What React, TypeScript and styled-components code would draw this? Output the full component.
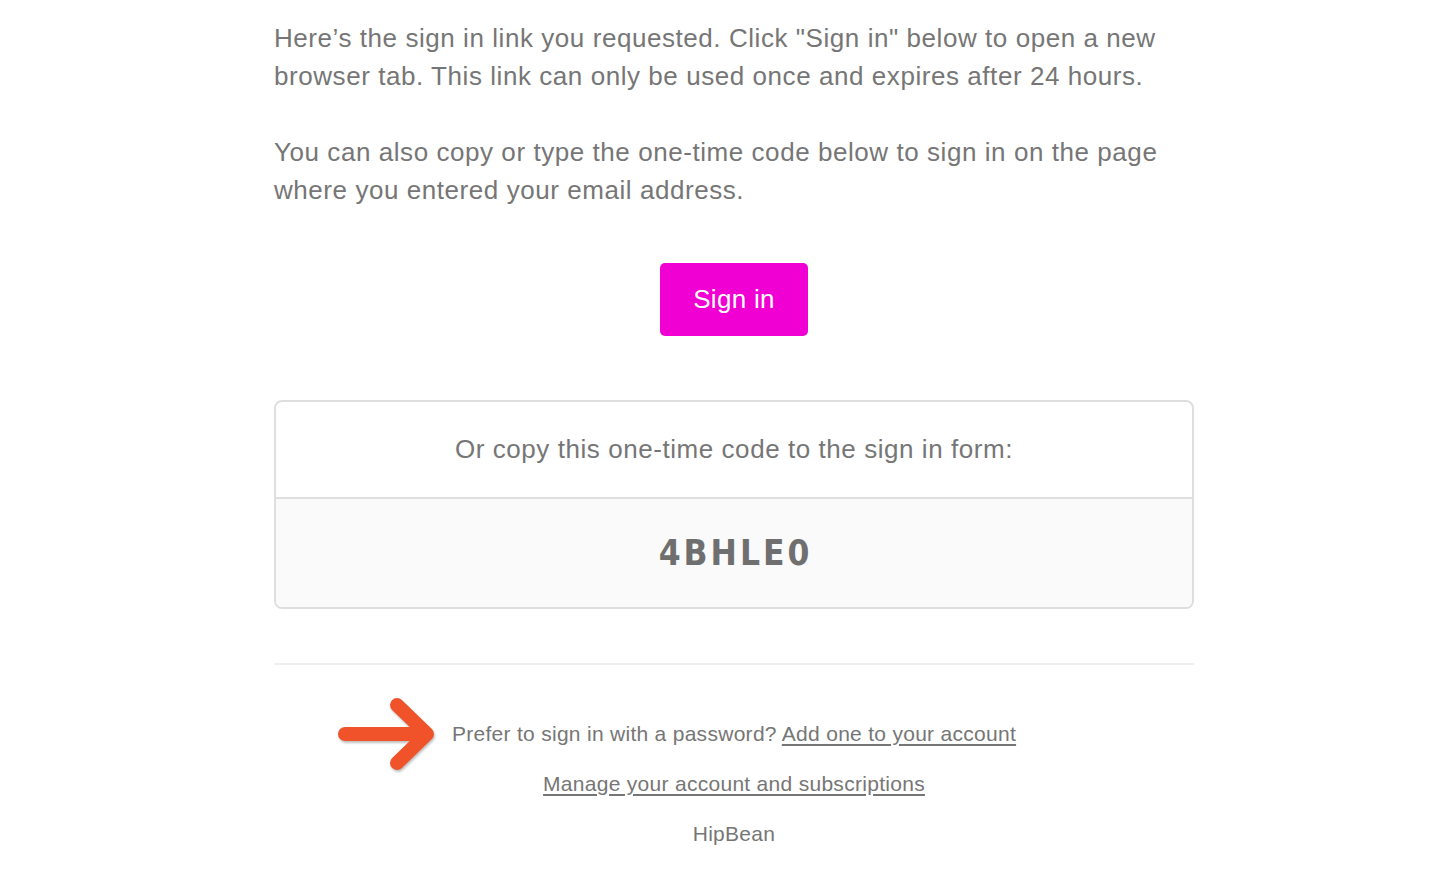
import React from 'react';
import styled, { createGlobalStyle } from 'styled-components';

const GlobalStyle = createGlobalStyle`
  body {
    margin: 0;
    background: #ffffff;
    font-family: "Liberation Sans", Arial, Helvetica, sans-serif;
    letter-spacing: 0.018em;
    color: #767676;
  }
`;

const Page = styled.div`
  width: 920px;
  margin-left: 274px;
  padding-top: 19px;
  padding-bottom: 40px;
  position: relative;
`;

const Paragraph = styled.p`
  margin: 0 0 38px;
  font-size: 26px;
  line-height: 38px;
  letter-spacing: 0.0215em;
  color: #767676;
`;

const ButtonRow = styled.div`
  display: flex;
  justify-content: center;
  margin-top: 54px;
`;

const SignInButton = styled.a`
  display: flex;
  align-items: center;
  justify-content: center;
  width: 148px;
  height: 73px;
  border-radius: 5px;
  background: #f100d3;
  color: #ffffff;
  font-size: 26px;
  text-decoration: none;
`;

const CodeBox = styled.div`
  margin-top: 64px;
  border: 2px solid #dedede;
  border-radius: 8px;
  overflow: hidden;
`;

const CodeLabel = styled.div`
  height: 95px;
  display: flex;
  align-items: center;
  justify-content: center;
  font-size: 26px;
  letter-spacing: 0.0215em;
  border-bottom: 2px solid #dedede;
`;

const CodeValue = styled.div`
  height: 108px;
  display: flex;
  align-items: center;
  justify-content: center;
  padding-left: 3px;
  background: #fafafa;
  font-family: "DejaVu Sans Condensed", "DejaVu Sans", sans-serif;
  font-stretch: condensed;
  font-weight: 700;
  font-size: 35px;
  letter-spacing: 3px;
  color: #6f6f6f;
`;

const Divider = styled.hr`
  margin: 54px 0 0;
  border: 0;
  border-top: 2px solid #eeeeee;
`;

const Footer = styled.div`
  display: flex;
  flex-direction: column;
  align-items: center;
  gap: 20px;
  margin-top: 54px;
  font-size: 21px;
  line-height: 30px;
`;

const FooterLine = styled.div`
  position: relative;
  color: #767676;
`;

const FooterLink = styled.a`
  color: #767676;
  text-decoration: underline;
  text-underline-offset: 3px;
`;

const ArrowMark = styled.svg`
  position: absolute;
  left: -117px;
  top: -25px;
  filter: drop-shadow(1px 2px 1px rgba(0, 0, 0, 0.25));
`;

const Arrow = () => (
  <ArrowMark width="104" height="80" viewBox="0 0 104 80">
    <g stroke="#f0532a" strokeWidth="14" strokeLinecap="round" strokeLinejoin="round" fill="none">
      <line x1="10" y1="40" x2="90" y2="40" />
      <polyline points="62,11 92,40 62,69" />
    </g>
  </ArrowMark>
);

export default function App() {
  return (
    <>
      <GlobalStyle />
      <Page>
        <Paragraph>
          Here’s the sign in link you requested. Click "Sign in" below to open a new browser tab.
          This link can only be used once and expires after 24 hours.
        </Paragraph>
        <Paragraph>
          You can also copy or type the one-time code below to sign in on the page where you entered
          your email address.
        </Paragraph>
        <ButtonRow>
          <SignInButton href="#">Sign in</SignInButton>
        </ButtonRow>
        <CodeBox>
          <CodeLabel>Or copy this one-time code to the sign in form:</CodeLabel>
          <CodeValue>4BHLE0</CodeValue>
        </CodeBox>
        <Divider />
        <Footer>
          <FooterLine>
            <Arrow />
            Prefer to sign in with a password? <FooterLink href="#">Add one to your account</FooterLink>
          </FooterLine>
          <FooterLine>
            <FooterLink href="#">Manage your account and subscriptions</FooterLink>
          </FooterLine>
          <FooterLine>HipBean</FooterLine>
        </Footer>
      </Page>
    </>
  );
}
